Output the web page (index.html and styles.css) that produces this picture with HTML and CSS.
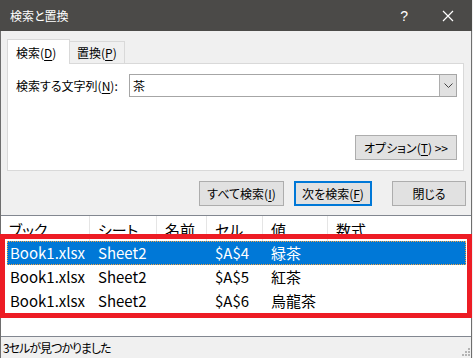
FILE: index.html
```html
<!DOCTYPE html>
<html>
<head>
    <title>検索と置換</title>
    <meta charset="UTF-8">
    <link rel="stylesheet" href="styles.css">
</head>
<body>
    <div class="window">
        <div class="titlebar">
            <span class="title">検索と置換</span>
            <span class="help">?</span>
            <svg class="close" width="12" height="12" viewBox="0 0 12 12">
                <path d="M1 1 L11 11 M11 1 L1 11" stroke="#fff" stroke-width="1.2" fill="none"/>
            </svg>
        </div>

        <div class="main">
            <div class="tabs">
                <div class="tab active">検索(<u>D</u>)</div>
                <div class="tab">置換(<u>P</u>)</div>
            </div>
            <div class="panel">
                <div class="find-row">
                    <label class="find-label">検索する文字列(<u>N</u>):</label>
                    <div class="combo">
                        <span class="combo-text">茶</span>
                        <span class="combo-btn">
                            <svg width="9" height="6" viewBox="0 0 9 6">
                                <path d="M0.5 0.5 L4.5 4.5 L8.5 0.5" stroke="#444" stroke-width="1" fill="none"/>
                            </svg>
                        </span>
                    </div>
                </div>
                <div class="options-row">
                    <button class="btn btn-options">オプション(<u>T</u>) &gt;&gt;</button>
                </div>
            </div>
            <div class="actions">
                <button class="btn btn-all">すべて検索(<u>I</u>)</button>
                <button class="btn btn-next">次を検索(<u>F</u>)</button>
                <button class="btn btn-close">閉じる</button>
            </div>
        </div>

        <div class="results">
            <div class="results-head">
                <div class="hcell">ブック</div>
                <div class="hcell">シート</div>
                <div class="hcell">名前</div>
                <div class="hcell">セル</div>
                <div class="hcell">値</div>
                <div class="hcell last">数式</div>
            </div>
            <div class="result-row selected">
                <div class="cell">Book1.xlsx</div>
                <div class="cell">Sheet2</div>
                <div class="cell"></div>
                <div class="cell">$A$4</div>
                <div class="cell">緑茶</div>
                <div class="cell"></div>
            </div>
            <div class="result-row">
                <div class="cell">Book1.xlsx</div>
                <div class="cell">Sheet2</div>
                <div class="cell"></div>
                <div class="cell">$A$5</div>
                <div class="cell">紅茶</div>
                <div class="cell"></div>
            </div>
            <div class="result-row">
                <div class="cell">Book1.xlsx</div>
                <div class="cell">Sheet2</div>
                <div class="cell"></div>
                <div class="cell">$A$6</div>
                <div class="cell">烏龍茶</div>
                <div class="cell"></div>
            </div>
        </div>

        <div class="statusbar">
            <span class="status-text">3セルが見つかりました</span>
            <svg class="grip" width="10" height="10" viewBox="0 0 10 10">
                <rect x="8" y="2" width="2" height="2" fill="#b4b4b4"/>
                <rect x="5" y="5" width="2" height="2" fill="#b4b4b4"/>
                <rect x="8" y="5" width="2" height="2" fill="#b4b4b4"/>
                <rect x="2" y="8" width="2" height="2" fill="#b4b4b4"/>
                <rect x="5" y="8" width="2" height="2" fill="#b4b4b4"/>
                <rect x="8" y="8" width="2" height="2" fill="#b4b4b4"/>
            </svg>
        </div>

        <!-- 注釈の赤枠 -->
        <div class="highlight"></div>
    </div>
</body>
</html>
```

FILE: styles.css
```css
body {
    margin: 0;
    background: #f0f0f0;
    font-family: "Noto Sans CJK JP", "Noto Sans", sans-serif;
    font-feature-settings: "palt";
    color: #000;
}
u {
    text-decoration: underline;
    text-underline-offset: 2px;
}
.window {
    position: relative;
    width: 472px;
    height: 358px;
    box-sizing: border-box;
    border-left: 1px solid #6e6e6e;
    border-right: 1px solid #6e6e6e;
    background: #f0f0f0;
    display: flex;
    flex-direction: column;
}
.titlebar {
    height: 31px;
    flex: none;
    margin: 0 -1px;
    background: #4b4a48;
    color: #fff;
    display: flex;
    align-items: center;
    padding-left: 10px;
    font-size: 12px;
}
.title {
    flex: 1;
}
.help {
    font-family: "Liberation Sans", sans-serif;
    font-size: 14px;
    margin-right: 34px;
}
.close {
    margin-right: 18px;
}
.main {
    padding: 8px 0 0 6px;
    flex: none;
}
.tabs {
    display: flex;
    align-items: flex-end;
    height: 24px;
    font-size: 12px;
}
.tab {
    box-sizing: border-box;
    height: 22px;
    padding: 0 0 0 8px;
    border: 1px solid #d9d9d9;
    border-bottom: none;
    display: flex;
    align-items: center;
    background: #f0f0f0;
    white-space: nowrap;
}
.tab.active {
    height: 25px;
    margin-bottom: -1px;
    width: 63px;
    background: #fff;
    position: relative;
    z-index: 1;
}
.tab:not(.active) {
    width: 56px;
    margin-left: -1px;
    padding-left: 7px;
}
.panel {
    box-sizing: border-box;
    width: 457px;
    height: 108px;
    border: 1px solid #d9d9d9;
    background: #fff;
    padding: 10px 6px 10px 8px;
    display: flex;
    flex-direction: column;
    justify-content: space-between;
    font-size: 12px;
}
.find-row {
    display: flex;
    align-items: center;
}
.find-label {
    width: 113px;
}
.combo {
    flex: 1;
    height: 23px;
    box-sizing: border-box;
    border: 1px solid #a6a6a6;
    display: flex;
    align-items: center;
}
.combo-text {
    flex: 1;
    padding-left: 3px;
}
.combo-btn {
    width: 17px;
    height: 21px;
    box-sizing: border-box;
    background: #e1e1e1;
    border-left: 1px solid #adadad;
    display: flex;
    align-items: center;
    justify-content: center;
}
.options-row {
    display: flex;
    justify-content: flex-end;
}
.btn {
    box-sizing: border-box;
    height: 25px;
    border: 1px solid #adadad;
    background: #e1e1e1;
    font-family: inherit;
    font-feature-settings: "palt";
    font-size: 12px;
    color: #000;
    padding: 0;
}
.btn-options {
    width: 102px;
}
.actions {
    display: flex;
    justify-content: flex-end;
    padding-right: 5px;
    margin-top: 10px;
    height: 25px;
}
.btn-all {
    width: 85px;
}
.btn-next {
    width: 78px;
    margin-left: 10px;
    border: 2px solid #0078d7;
}
.btn-close {
    width: 74px;
    margin-left: 20px;
}
.results {
    margin-top: 9px;
    height: 122px;
    box-sizing: border-box;
    border-top: 1px solid #828790;
    border-bottom: 1px solid #828790;
    background: #fff;
    font-size: 15px;
    flex: none;
}
.results-head {
    display: grid;
    grid-template-columns: 89px 67px 50px 56px 65px 1fr;
    height: 25px;
}
.hcell {
    border-right: 1px solid #e5e5e5;
    padding: 2px 0 0 8px;
    line-height: 24px;
    overflow: hidden;
}
.hcell.last {
    border-right: none;
}
.result-row {
    display: grid;
    grid-template-columns: 83px 67px 50px 56px 65px 1fr;
    height: 24px;
    margin: 0 5px 0 6px;
    line-height: 24px;
}
.result-row .cell {
    padding-left: 8px;
    white-space: nowrap;
    overflow: hidden;
}
.result-row .cell:first-child {
    padding-left: 3px;
}
.result-row.selected {
    background: #0078d7;
    color: #fff;
    outline: 1px dotted #f3a445;
    outline-offset: -1px;
}
.statusbar {
    flex: 1;
    display: flex;
    align-items: center;
    justify-content: space-between;
    padding-left: 2px;
    font-size: 12px;
}
.status-text {
    letter-spacing: -1px;
}
.grip {
    align-self: flex-end;
    margin: 0 1px 2px 0;
}
.highlight {
    position: absolute;
    left: -1px;
    top: 234px;
    width: 472px;
    height: 84px;
    box-sizing: border-box;
    border: 5px solid #ed1c24;
    pointer-events: none;
}
```
